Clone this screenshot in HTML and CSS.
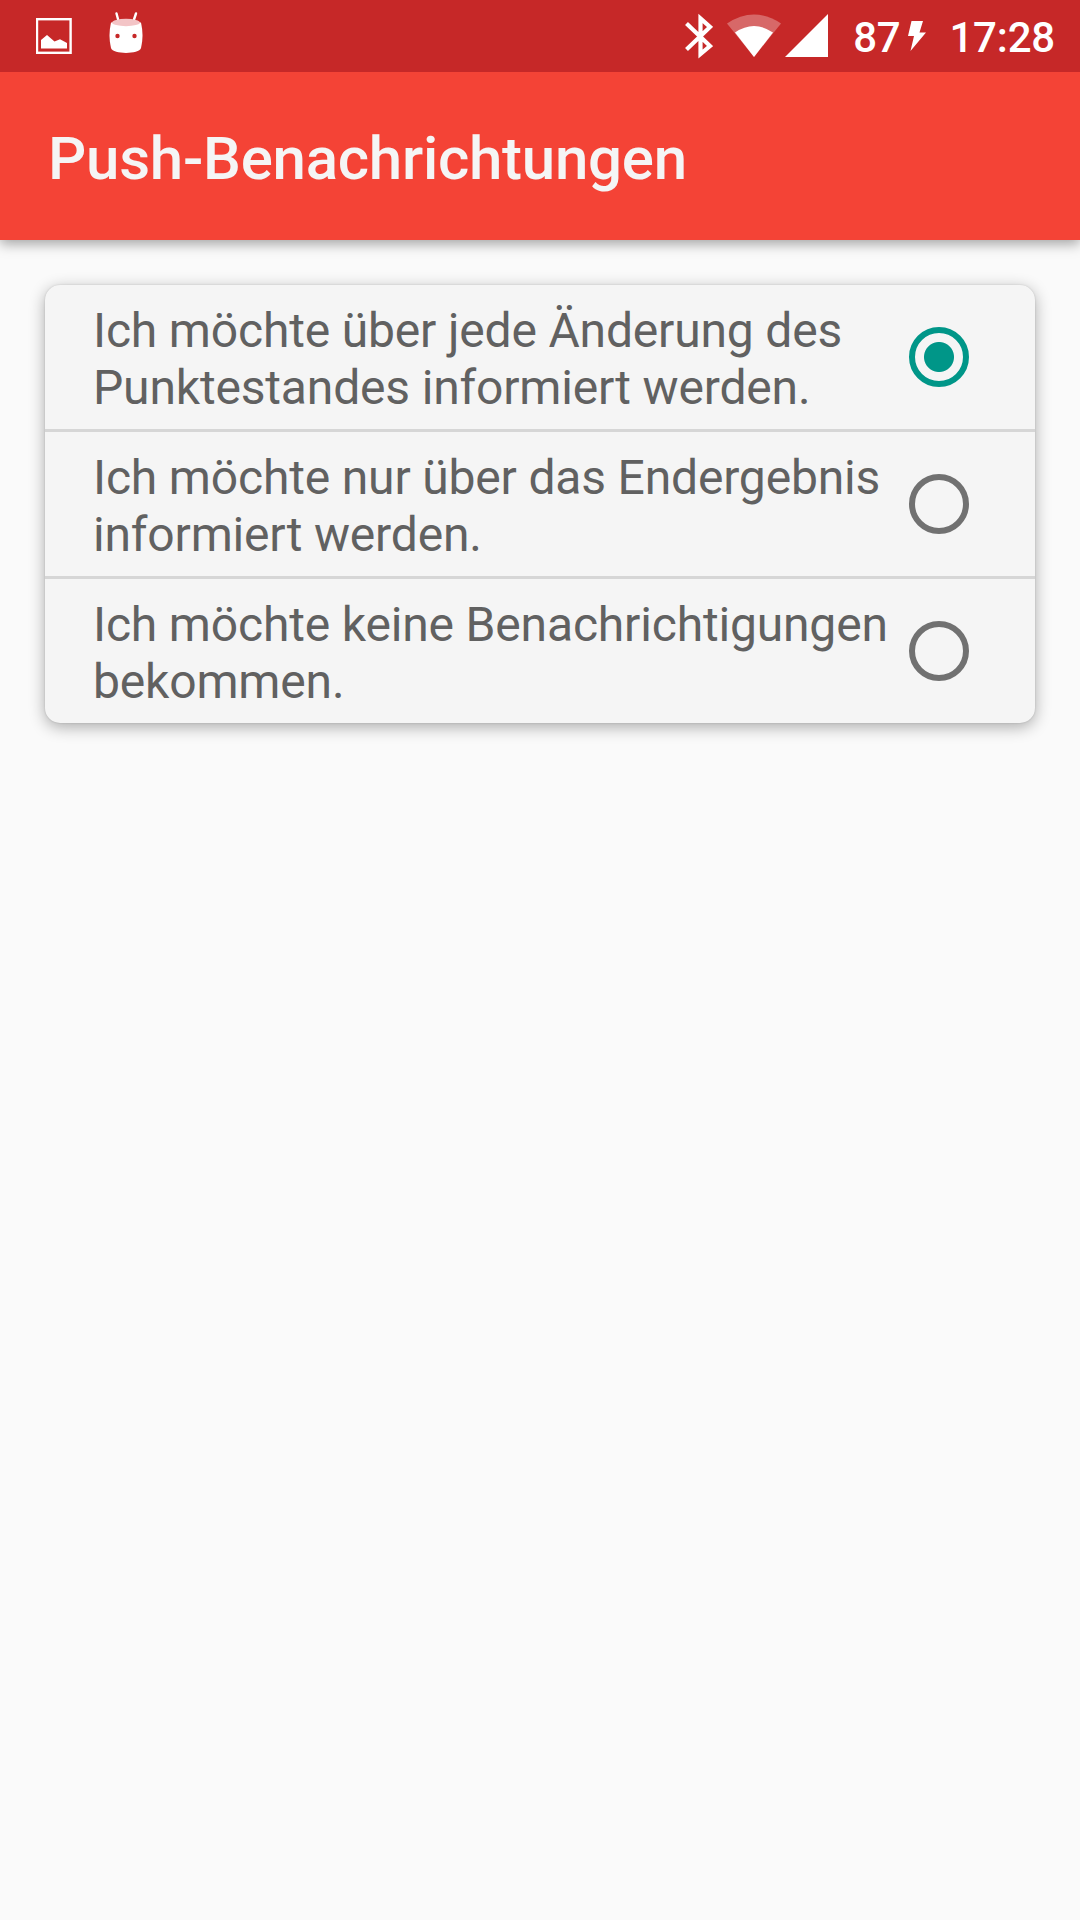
FILE: index.html
```html
<!DOCTYPE html>
<html lang="de">
<head>
<meta charset="utf-8">
<title>Push-Benachrichtungen</title>
<link rel="stylesheet" href="styles.css">
</head>
<body>
<header class="status-bar">
  <div class="notifications">
    <svg class="icon" width="36" height="72" viewBox="0 0 36 72">
      <rect x="1" y="19.200" width="33.600" height="33.600" fill="none" stroke="#fff" stroke-width="2.400"/>
      <path fill="#fff" d="M5 48.500V40L11 35L18.500 41.500L24 39.300L31 43V48.500Z"/>
    </svg>
    <svg class="icon" width="36" height="72" viewBox="0 0 36 72">
      <path d="M8.500 13.500L10.500 21M28 13.500L25.500 21" stroke="#fff" stroke-width="2.400" stroke-linecap="round"/>
      <path fill="#fff" d="M3 22.500C1 31 1 40 3 48C5 54.500 31 54.500 33 48C35 40 35 31 33 22.500Z"/>
      <ellipse cx="18" cy="22.500" rx="14" ry="3.700" fill="#f3c4c6"/>
      <circle cx="9.500" cy="36" r="2.200" fill="#c62828"/>
      <circle cx="26.500" cy="36" r="2.200" fill="#c62828"/>
    </svg>
  </div>
  <div class="system">
    <svg class="icon bluetooth" width="28" height="72" viewBox="0 0 28 72">
      <path fill="none" stroke="#fff" stroke-width="4.200" d="M1.500 23.500L25 46L15.500 54V18.500L25 27L1.500 49.500"/>
    </svg>
    <svg class="icon wifi" width="54" height="72" viewBox="0 0 54 72">
      <path fill="#fff" fill-opacity=".3" d="M0 23.500Q27 5.500 54 23.500L27 57Z"/>
      <path fill="#fff" d="M8 32.500Q27 19.500 46 32.500L27 57Z"/>
    </svg>
    <svg class="icon signal" width="43" height="72" viewBox="0 0 43 72">
      <path fill="#fff" d="M0 57H43V14Z"/>
    </svg>
    <span class="battery">87</span>
    <svg class="icon bolt" width="18" height="72" viewBox="0 0 18 72">
      <path fill="#fff" d="M3.500 21H15L11.500 32.500H18L2.500 51L6 36H0Z"/>
    </svg>
    <span class="clock">17:28</span>
  </div>
</header>
<div class="app-bar"><h1 class="title">Push-Benachrichtungen</h1></div>
<main class="content">
  <div class="card">
    <label class="option">
      <span class="label">Ich möchte über jede Änderung des<br>Punktestandes informiert werden.</span>
      <input class="radio" type="radio" name="push" checked>
    </label>
    <label class="option">
      <span class="label">Ich möchte nur über das Endergebnis<br>informiert werden.</span>
      <input class="radio" type="radio" name="push">
    </label>
    <label class="option">
      <span class="label">Ich möchte keine Benachrichtigungen<br>bekommen.</span>
      <input class="radio" type="radio" name="push">
    </label>
  </div>
</main>
</body>
</html>
```
FILE: styles.css
```css
* { box-sizing: border-box; }
body {
  margin: 0;
  min-height: 1920px;
  background: #fafafa;
  font-family: Roboto, sans-serif;
}
.status-bar {
  position: relative;
  z-index: 1;
  display: flex;
  justify-content: space-between;
  height: 72px;
  padding: 0 25px 0 36px;
  background: #c62828;
  color: #fff;
  font-size: 42px;
  font-weight: 500;
  line-height: 75px;
}
.notifications { display: flex; gap: 36px; }
.system { display: flex; }
.icon { display: block; flex: none; }
.wifi { margin-left: 14px; }
.signal { margin-left: 4px; }
.battery { margin-left: 25px; letter-spacing: -.3px; }
.bolt { margin-left: 8px; }
.clock { margin-left: 23px; letter-spacing: -.2px; }
.app-bar {
  display: flex;
  align-items: center;
  height: 168px;
  padding: 5px 48px 0;
  background: #f44336;
  box-shadow: 0 4px 12px rgba(0, 0, 0, .35);
}
.title {
  margin: 0;
  color: #f5f5f5;
  font-size: 60px;
  font-weight: 500;
  line-height: 70px;
  letter-spacing: -.25px;
}
.content { padding: 45px; }
.card {
  border-radius: 15px;
  background: #f5f5f5;
  box-shadow: 0 0 2px rgba(0, 0, 0, .15), 0 4px 16px rgba(0, 0, 0, .32);
}
.option {
  display: flex;
  justify-content: space-between;
  align-items: center;
  height: 144px;
  padding: 0 66px 0 48px;
}
.option + .option {
  height: 147px;
  border-top: 3px solid #d6d6d6;
}
.label {
  padding-top: 4px;
  color: #616161;
  font-size: 48px;
  line-height: 57px;
  letter-spacing: -.17px;
  white-space: nowrap;
}
.radio {
  appearance: none;
  flex: none;
  width: 60px;
  height: 60px;
  margin: 0;
  border: 6px solid #717171;
  border-radius: 50%;
}
.radio:checked {
  border-color: #009688;
  background: radial-gradient(circle, #009688 14.5px, transparent 15.5px);
}
```
